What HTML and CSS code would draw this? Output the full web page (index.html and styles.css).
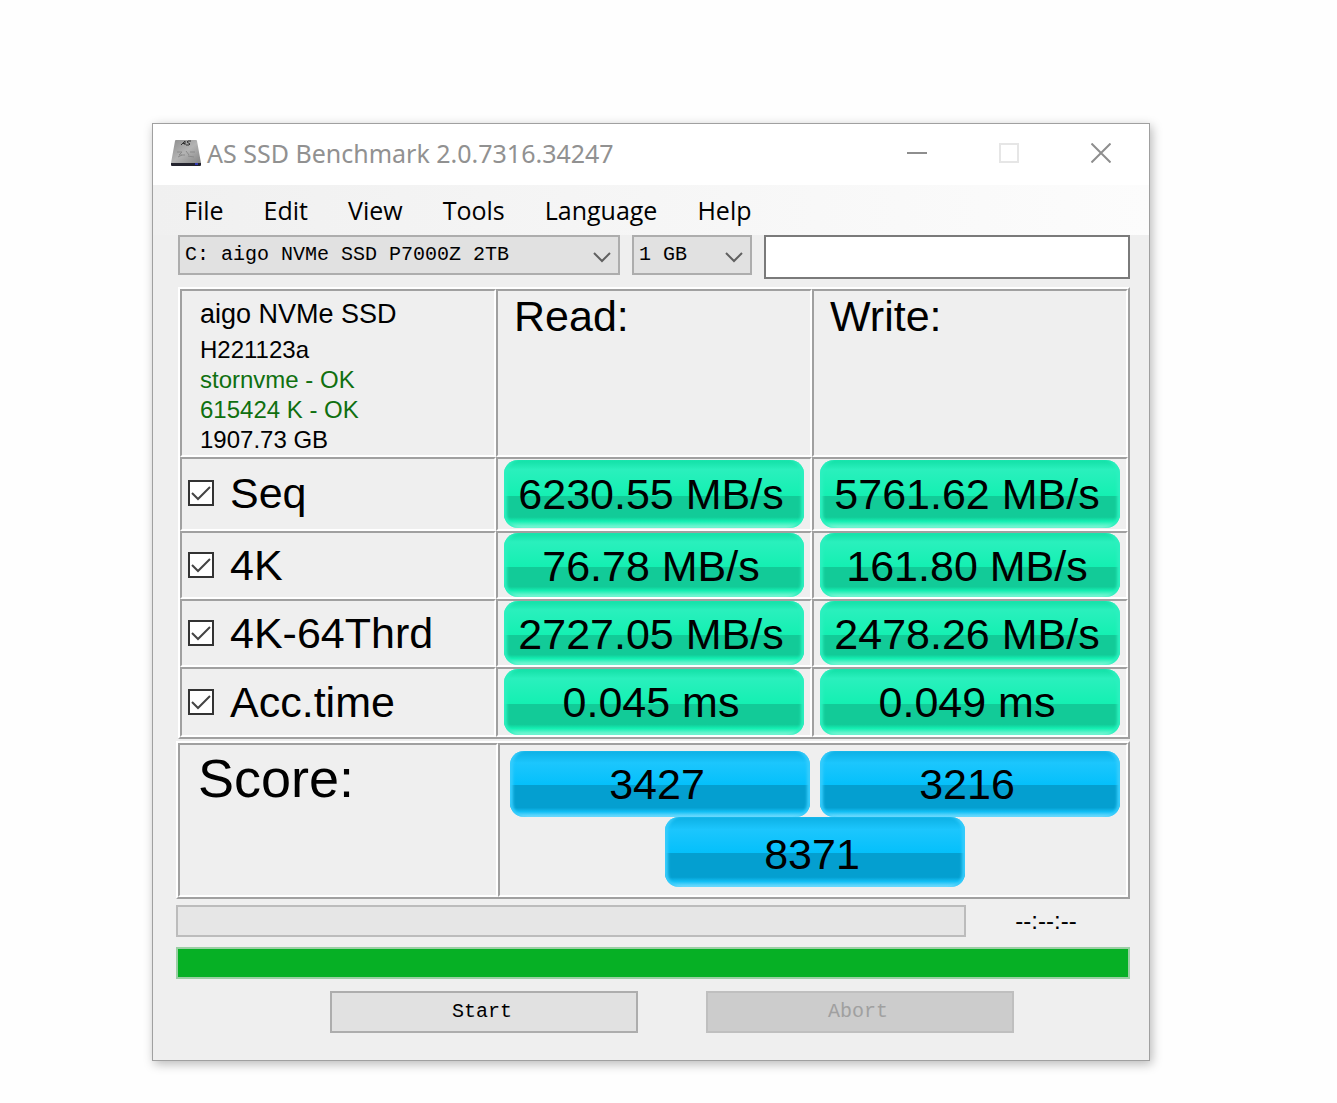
FILE: index.html
```html
<!DOCTYPE html>
<html lang="en">
<head>
<meta charset="utf-8">
<title>AS SSD Benchmark</title>
<link rel="stylesheet" href="styles.css">
</head>
<body>
<main class="window">
  <header class="titlebar">
    <svg class="app-icon" width="32" height="28" viewBox="0 0 32 28" aria-hidden="true">
      <defs>
        <linearGradient id="disk" x1="0" y1="0" x2="1" y2="1">
          <stop offset="0" stop-color="#8c8c8c"/><stop offset=".5" stop-color="#b4b4b4"/><stop offset="1" stop-color="#858585"/>
        </linearGradient>
      </defs>
      <path d="M6 1h20q1 0 1 1l4 22H1L5 2q0-1 1-1z" fill="url(#disk)"/>
      <path d="M1 24h30v2q0 1-1 1H2q-1 0-1-1z" fill="#23232e"/>
      <path d="M25 24h3v2h-3z" fill="#3038b0"/>
      <path d="M11 6l4-4v4M12 4.500h3M21 2h-3l-1 1 3 2-1 1h-3" fill="none" stroke="#333" stroke-width="1"/>
      <path d="M7 13h5l-3 3h6M16 12l3 4M20 13h5M8 18l4-2M18 17l6 1" fill="none" stroke="#8a8a8a" stroke-width="1"/>
    </svg>
    <h1 class="title">AS SSD Benchmark 2.0.7316.34247</h1>
    <button class="caption" aria-label="Minimize"><svg width="20" height="20" viewBox="0 0 20 20"><path d="M0 10h20" stroke="#8e8e8e" stroke-width="2"/></svg></button>
    <button class="caption" aria-label="Maximize" disabled><svg width="20" height="20" viewBox="0 0 20 20"><path d="M1 1h18v18H1z" fill="none" stroke="#e6e6e6" stroke-width="2"/></svg></button>
    <button class="caption" aria-label="Close"><svg width="20" height="20" viewBox="0 0 20 20"><path d="M.5.5l19 19M19.500.5l-19 19" stroke="#8e8e8e" stroke-width="2"/></svg></button>
  </header>
  <nav class="menu">
    <a href="#file">File</a><a href="#edit">Edit</a><a href="#view">View</a><a href="#tools">Tools</a><a href="#language">Language</a><a href="#help">Help</a>
  </nav>
  <div class="content">
    <div class="options">
      <div class="combo combo-drive">
        <select aria-label="Drive"><option>C: aigo NVMe SSD P7000Z 2TB</option></select>
        <svg width="18" height="12" viewBox="0 0 18 12" aria-hidden="true"><path d="M1 2l8 8 8-8" fill="none" stroke="#606060" stroke-width="2"/></svg>
      </div>
      <div class="combo combo-size">
        <select aria-label="Test size"><option>1 GB</option></select>
        <svg width="18" height="12" viewBox="0 0 18 12" aria-hidden="true"><path d="M1 2l8 8 8-8" fill="none" stroke="#606060" stroke-width="2"/></svg>
      </div>
      <input class="note" type="text" aria-label="Note">
    </div>
    <table class="results">
      <tr class="row-head">
        <td class="info">
          <p class="model">aigo NVMe SSD</p>
          <p>H221123a</p>
          <p class="ok">stornvme - OK</p>
          <p class="ok">615424 K - OK</p>
          <p>1907.73 GB</p>
        </td>
        <th scope="col">Read:</th>
        <th scope="col">Write:</th>
      </tr>
      <tr class="row-seq">
        <td><label class="test"><span class="check"><input type="checkbox" checked><svg width="20" height="16" viewBox="0 0 20 16"><path d="M1 8l6 6L19 2" fill="none" stroke="#444" stroke-width="2"/></svg></span>Seq</label></td>
        <td><div class="pill">6230.55 MB/s</div></td>
        <td><div class="pill">5761.62 MB/s</div></td>
      </tr>
      <tr class="row-test">
        <td><label class="test"><span class="check"><input type="checkbox" checked><svg width="20" height="16" viewBox="0 0 20 16"><path d="M1 8l6 6L19 2" fill="none" stroke="#444" stroke-width="2"/></svg></span>4K</label></td>
        <td><div class="pill">76.78 MB/s</div></td>
        <td><div class="pill">161.80 MB/s</div></td>
      </tr>
      <tr class="row-test">
        <td><label class="test"><span class="check"><input type="checkbox" checked><svg width="20" height="16" viewBox="0 0 20 16"><path d="M1 8l6 6L19 2" fill="none" stroke="#444" stroke-width="2"/></svg></span>4K-64Thrd</label></td>
        <td><div class="pill">2727.05 MB/s</div></td>
        <td><div class="pill">2478.26 MB/s</div></td>
      </tr>
      <tr class="row-last">
        <td><label class="test"><span class="check"><input type="checkbox" checked><svg width="20" height="16" viewBox="0 0 20 16"><path d="M1 8l6 6L19 2" fill="none" stroke="#444" stroke-width="2"/></svg></span>Acc.time</label></td>
        <td><div class="pill">0.045 ms</div></td>
        <td><div class="pill">0.049 ms</div></td>
      </tr>
    </table>
    <section class="score">
      <h2 class="score-label">Score:</h2>
      <div class="score-values">
        <div class="score-pair">
          <div class="pill pill-blue">3427</div>
          <div class="pill pill-blue">3216</div>
        </div>
        <div class="pill pill-blue pill-total">8371</div>
      </div>
    </section>
    <div class="status">
      <progress class="bar" value="0" max="100" aria-label="Current test"></progress>
      <span class="time">--:--:--</span>
    </div>
    <progress class="bar bar-total" value="100" max="100" aria-label="Overall"></progress>
    <div class="actions">
      <button class="action">Start</button>
      <button class="action" disabled>Abort</button>
    </div>
  </div>
</main>
</body>
</html>
```
FILE: styles.css
```css
* {
  box-sizing: border-box;
}

body {
  margin: 0;
  padding: 123px 187px 42px 152px;
  background: #fefefe;
  color: #000;
  font-family: "Liberation Sans", Arial, sans-serif;
}

h1, h2, p {
  margin: 0;
  font-weight: normal;
}

.window {
  border: 1px solid #a0a0a0;
  background: #efefef;
  box-shadow: 2px 3px 10px rgba(0, 0, 0, .28);
}

.titlebar {
  display: flex;
  align-items: center;
  height: 61px;
  padding: 0 2px 3px 17px;
  background: #fff;
}

.app-icon {
  flex: none;
  margin-right: 5px;
}

.title {
  flex: 1;
  color: #919191;
  font: 25px/36px "Noto Sans", "Open Sans", sans-serif;
  white-space: nowrap;
}

.caption {
  display: grid;
  place-items: center;
  width: 92px;
  height: 58px;
  padding: 0;
  border: 0;
  background: none;
}

.menu {
  display: flex;
  gap: 40px;
  height: 50px;
  padding-left: 31px;
  background: linear-gradient(90deg, #f0f0f0, #fcfcfc);
  font: 25px/50px "Open Sans", "Noto Sans", sans-serif;
}

.menu a {
  color: #000;
  text-decoration: none;
}

.content {
  padding: 0 19px 27px 23px;
}

.options {
  display: flex;
  align-items: flex-start;
  gap: 12px;
  margin: 0 0 8px 2px;
}

.combo {
  display: grid;
  align-items: center;
  height: 40px;
}

.combo-drive {
  flex: 0 0 442px;
}

.combo-size {
  flex: 0 0 120px;
}

.combo select,
.combo svg {
  grid-area: 1 / 1;
}

.combo svg {
  justify-self: end;
  margin: 4px 9px 0 0;
  pointer-events: none;
}

.combo select {
  appearance: none;
  width: 100%;
  height: 40px;
  padding: 0 0 0 5px;
  border: 2px solid #adadad;
  border-radius: 0;
  background: #e1e1e1;
  color: #000;
  font: 20px/36px "Liberation Mono", monospace;
}

.note {
  flex: 1;
  min-width: 0;
  height: 44px;
  border: 2px solid #7a7a7a;
  background: #fff;
}

.results {
  width: calc(100% - 2px);
  margin-left: 2px;
  border: 2px solid;
  border-color: #fff #a0a0a0 #a0a0a0 #fff;
  border-spacing: 0;
  table-layout: fixed;
}

.results td,
.results th {
  padding: 0 6px;
  border: 2px solid;
  border-color: #a0a0a0 #fff #fff #a0a0a0;
}

.results th {
  padding: 2px 16px;
  font-size: 43px;
  font-weight: normal;
  line-height: 46px;
  text-align: left;
  vertical-align: top;
}

.row-head {
  height: 168px;
}

.row-seq {
  height: 74px;
}

.row-test {
  height: 68px;
}

.row-last {
  height: 70px;
}

.results .info {
  padding: 8px 18px 0;
  font-size: 24px;
  line-height: 30px;
  vertical-align: top;
}

.info .model {
  margin-bottom: 6px;
  font-size: 27px;
}

.info .ok {
  color: #107010;
}

.test {
  display: flex;
  align-items: center;
  gap: 16px;
  font-size: 43px;
  line-height: 48px;
}

.row-seq .test {
  padding-bottom: 3px;
}

.check {
  display: grid;
  place-items: center;
}

.check input,
.check svg {
  grid-area: 1 / 1;
}

.check svg {
  pointer-events: none;
}

.check input {
  appearance: none;
  width: 26px;
  height: 26px;
  margin: 0;
  border: 2px solid #333;
  background: #fff;
}

.pill {
  height: 66px;
  padding-right: 6px;
  border-radius: 14px;
  background: linear-gradient(#12dfa6 0, #2af0bd 14%, #14f0b2 53%, #12cb98 53%, #12cb98 84%, #14efb2 90%, #8df7da 100%);
  box-shadow: inset 4px 0 3px -1px #2cf0bf, inset -4px 0 3px -1px #2cf0bf;
  font-size: 43px;
  line-height: 66px;
  text-align: center;
}

.row-seq .pill {
  height: 68px;
  line-height: 68px;
}

.row-test .pill {
  height: 64px;
}

.pill-blue {
  flex: 0 0 300px;
  background: linear-gradient(#0cb0e4 0, #1cc6fd 18%, #04c0fb 52%, #049fd0 52%, #049fd0 86%, #12bff5 92%, #7fe0ff 100%);
  box-shadow: inset 4px 0 3px -1px #36ccfc, inset -4px 0 3px -1px #36ccfc;
}

.score {
  display: flex;
  margin-top: 2px;
  border: 2px solid;
  border-color: #fff #a0a0a0 #a0a0a0 #fff;
}

.score-label,
.score-values {
  border: 2px solid;
  border-color: #a0a0a0 #fff #fff #a0a0a0;
}

.score-label {
  flex: 0 0 320px;
  padding: 4px 18px;
  font-size: 54px;
  line-height: 58px;
}

.score-values {
  flex: 1;
  padding: 6px 6px 8px 10px;
}

.score-pair {
  display: flex;
  justify-content: space-between;
}

.pill-total {
  width: 300px;
  height: 70px;
  margin: 0 auto;
  line-height: 74px;
}

.status {
  display: flex;
  align-items: center;
  margin: 6px 0 10px;
}

.bar {
  appearance: none;
  display: block;
  width: 100%;
  height: 32px;
  border: 2px solid #bcbcbc;
  background: #e6e6e6;
}

.bar::-webkit-progress-bar {
  background: #e6e6e6;
}

.bar::-webkit-progress-value {
  background: #06b025;
}

.status .bar {
  flex: 1;
}

.bar-total {
  border-color: #9bcfa4;
}

.time {
  flex: 0 0 164px;
  padding-right: 4px;
  font-size: 24px;
  line-height: 32px;
  text-align: center;
}

.actions {
  display: flex;
  justify-content: center;
  gap: 68px;
  margin-top: 12px;
  padding-left: 38px;
}

.action {
  width: 308px;
  height: 42px;
  padding: 0 4px 0 0;
  border: 2px solid #adadad;
  background: #e1e1e1;
  color: #000;
  font: 20px/38px "Liberation Mono", monospace;
}

.action:disabled {
  border-color: #bfbfbf;
  background: #ccc;
  color: #a0a0a0;
}
```
